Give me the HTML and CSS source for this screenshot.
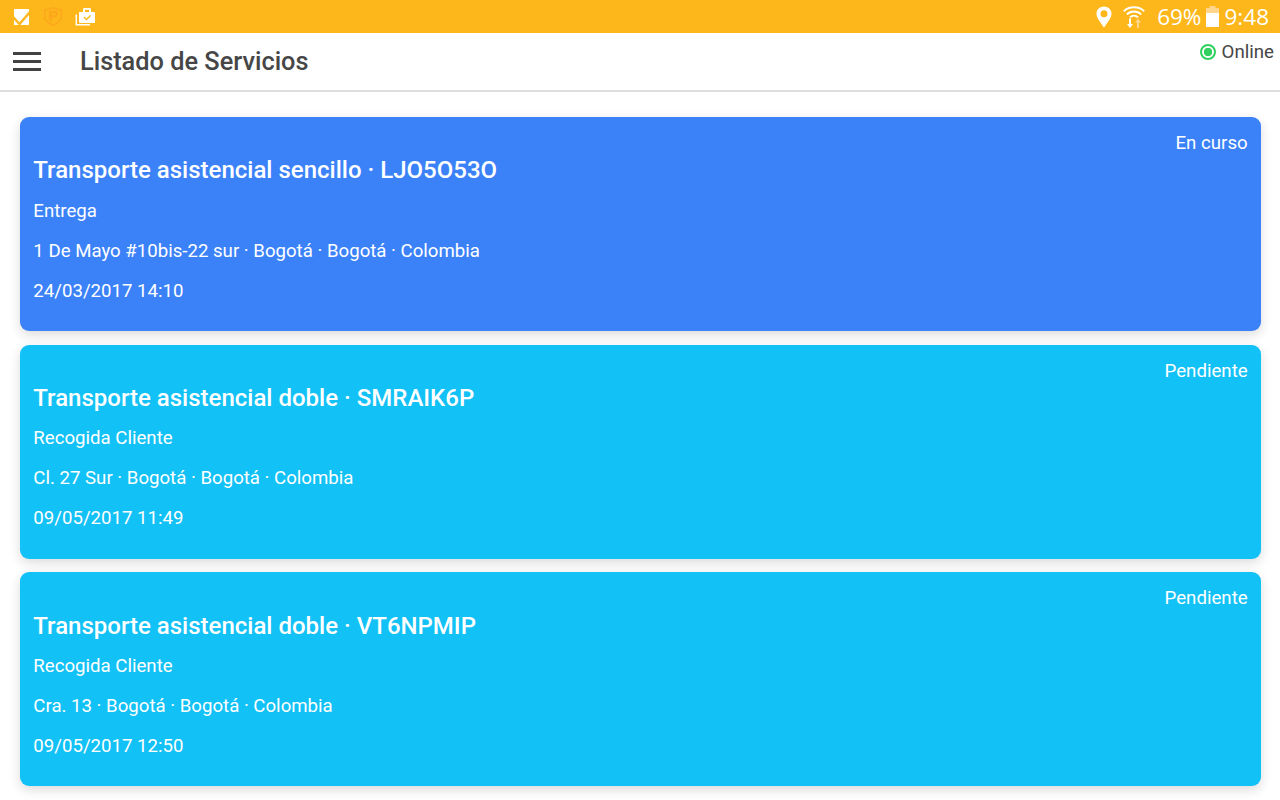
FILE: index.html
```html
<!DOCTYPE html>
<html lang="es">
<head>
<meta charset="utf-8">
<title>Listado de Servicios</title>
<link rel="stylesheet" href="styles.css">
</head>
<body>
<div class="statusbar">
  <div class="status-left">
    <svg class="ic-check" width="15" height="16" viewBox="0 0 15 16"><path fill="#fff" d="M0 0h15v16H0z"/><path fill="none" stroke="#fdb71a" stroke-width="2.400" d="M-1 8 5.500 15 16 3"/></svg>
    <svg class="ic-shield" width="18" height="19" viewBox="0 0 18 19"><path fill="#fca71c" d="M0 2.500 9 0l9 2.500v7.500c0 4-4.500 7-9 9-4.500-2-9-5-9-9z"/><path fill="#fdb71a" d="M1.500 3.700 9 1.600l7.500 2.100v6.300c0 3.200-3.700 5.700-7.500 7.400-3.800-1.700-7.500-4.200-7.500-7.400z"/><path fill="#fca71c" d="M5 4h6.500C13.500 4 14 5.500 14 7s-.8 3.500-2.500 3.500H8v4.800l-3-2zm3 2.200v2h3c.6 0 .8-.5.8-1s-.2-1-.8-1z"/></svg>
    <svg class="ic-case" width="20" height="18" viewBox="0 0 20 18"><path fill="#fff" d="M4 4h4V1.500C8 .5 8.500 0 9.500 0h5c1 0 1.500.5 1.500 1.500V4h3c.5 0 1 .5 1 1v9c0 .5-.5 1-1 1H5c-.5 0-1-.5-1-1z"/><path fill="#fdb71a" d="M10 1.800h4V4h-4z"/><path fill="none" stroke="#fdb71a" stroke-width="1.400" d="m9 9 2.500 2.500L15.500 7.500"/><path fill="none" stroke="#fff" stroke-width="1.500" d="M1.300 6.500V16.700H15"/></svg>
  </div>
  <div class="status-right">
    <svg class="ic-pin" width="16" height="22" viewBox="0 0 16 22"><path fill="#fff" fill-rule="evenodd" d="M8 .5C3.800.5.500 3.600.500 7.700c0 4.500 4.800 9.800 7.500 13.800 2.700-4 7.500-9.300 7.500-13.800C15.500 3.600 12.200.5 8 .5zm0 3.800a3.500 3.500 0 1 1 0 7 3.500 3.500 0 0 1 0-7z"/></svg>
    <svg class="ic-wifi" width="22" height="23" viewBox="0 0 22 23"><g fill="none" stroke="#fff" stroke-width="1.900"><path d="M.7 6.300C6 .9 16 .9 21.300 6.300"/><path d="M3.800 9.400c4-3.900 10.400-3.900 14.400 0"/><path d="M6.900 12.400c2.400-2.300 5.800-2.300 8.200 0"/></g><path fill="#fff" d="M6 13.500h2v5.500h2L7 23l-3-4h2z"/><path fill="#fed58a" d="M14 23v-5.500h-2l3-4 3 4h-2V23z"/></svg>
    <span class="status-pct">69%</span>
    <svg class="ic-batt" width="13" height="21" viewBox="0 0 13 21"><path fill="#fed58a" d="M3.500 0h6v2H13v5H0V2h3.500z"/><path fill="#fff" d="M0 7h13v14H0z"/></svg>
    <span class="status-time">9:48</span>
  </div>
</div>

<header class="toolbar">
  <button class="menu-btn" aria-label="Menú"><span></span><span></span><span></span></button>
  <h1 class="toolbar-title">Listado de Servicios</h1>
  <div class="online"><span class="online-dot"></span>Online</div>
</header>

<main class="list">
  <article class="card card-active">
    <div class="card-status">En curso</div>
    <h2 class="card-title">Transporte asistencial sencillo · LJO5O53O</h2>
    <p class="card-line">Entrega</p>
    <p class="card-line">1 De Mayo #10bis-22 sur · Bogotá · Bogotá · Colombia</p>
    <p class="card-line">24/03/2017 14:10</p>
  </article>
  <article class="card card-pending">
    <div class="card-status">Pendiente</div>
    <h2 class="card-title">Transporte asistencial doble · SMRAIK6P</h2>
    <p class="card-line">Recogida Cliente</p>
    <p class="card-line">Cl. 27 Sur · Bogotá · Bogotá · Colombia</p>
    <p class="card-line">09/05/2017 11:49</p>
  </article>
  <article class="card card-pending">
    <div class="card-status">Pendiente</div>
    <h2 class="card-title">Transporte asistencial doble · VT6NPMIP</h2>
    <p class="card-line">Recogida Cliente</p>
    <p class="card-line">Cra. 13 · Bogotá · Bogotá · Colombia</p>
    <p class="card-line">09/05/2017 12:50</p>
  </article>
</main>
</body>
</html>
```
FILE: styles.css
```css
* { box-sizing: border-box; }
html, body { margin: 0; height: 100%; overflow: hidden; }
body { background: #fff; font-family: Roboto, "Liberation Sans", sans-serif; color: #fff; }

.statusbar {
  height: 33px;
  background: #fdb71a;
  display: flex;
  justify-content: space-between;
  align-items: center;
  padding: 0 11px 0 14px;
}
.status-left { display: flex; align-items: center; }
.ic-check { margin-right: 15px; }
.ic-shield { margin-right: 13px; }
.status-right {
  display: flex;
  align-items: center;
  font-family: "Open Sans", Roboto, sans-serif;
  font-size: 22.500px;
  color: #fff;
}
.ic-pin { margin-right: 11px; }
.ic-wifi { margin-right: 12px; }
.status-pct { margin-right: 5px; }
.ic-batt { margin-right: 5px; }

.toolbar {
  height: 59px;
  position: relative;
  display: flex;
  align-items: center;
  background: #fff;
  border-bottom: 2px solid #dedede;
  padding-left: 13px;
}
.menu-btn {
  width: 27.500px;
  height: 18.500px;
  padding: 0;
  border: 0;
  background: none;
  display: flex;
  flex-direction: column;
  justify-content: space-between;
  margin-right: 39.500px;
}
.menu-btn span { display: block; height: 2.500px; background: #424242; }
.toolbar-title {
  margin: 0;
  font-size: 25.330px;
  font-weight: 500;
  color: #464646;
}
.online {
  position: absolute;
  top: 7px;
  right: 6px;
  display: flex;
  align-items: center;
  font-size: 18.670px;
  line-height: 24px;
  color: #464646;
}
.online-dot {
  width: 16px;
  height: 16px;
  margin-right: 6px;
  border-radius: 50%;
  border: 2px solid #32d05f;
  background: radial-gradient(circle, #32d05f 0 4px, #fff 4.500px);
}

.list { padding: 25px 19px 0 20px; }
.card {
  height: 214px;
  margin-bottom: 13.670px;
  border-radius: 9px;
  padding: 13px 13.330px;
  box-shadow: 0 4px 12px rgba(0, 0, 0, 0.14);
}
.card-active { background: #3b82f9; }
.card-pending { background: #12c1f6; }
.card-status { text-align: right; font-size: 18.670px; line-height: 26.300px; }
.card-title { margin: 0 0 13.300px; font-size: 24px; font-weight: 500; line-height: 28px; }
.card-line { margin: 0 0 13.870px; font-size: 18.640px; line-height: 26.130px; }
```
